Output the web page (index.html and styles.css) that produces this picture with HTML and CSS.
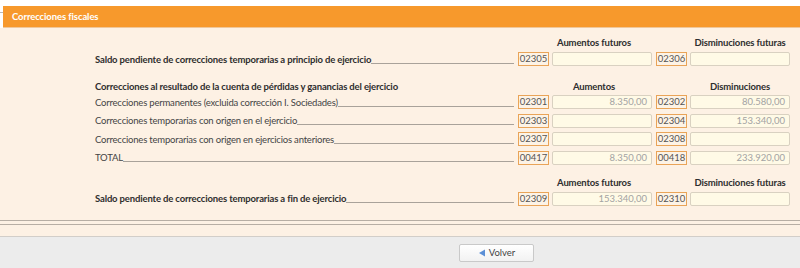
FILE: index.html
```html
<!DOCTYPE html>
<html lang="es">
<head>
<meta charset="utf-8">
<title>Correcciones fiscales</title>
<link rel="stylesheet" href="styles.css">
</head>
<body>
<div class="page">
  <div class="topline"><span class="stub"></span></div>
  <div class="titlebar">Correcciones fiscales</div>
  <div class="panel">
    <div class="content">
      <div class="heads first">
        <span class="h h1">Aumentos futuros</span>
        <span class="h h2">Disminuciones futuras</span>
      </div>
      <div class="row">
        <span class="label bold"><span class="txt">Saldo pendiente de correcciones temporarias a principio de ejercicio</span><span class="fill"></span></span>
        <span class="code">02305</span><span class="inp"></span>
        <span class="code c2">02306</span><span class="inp"></span>
      </div>

      <div class="heads sect">
        <span class="label bold"><span class="txt">Correcciones al resultado de la cuenta de pérdidas y ganancias del ejercicio</span></span>
        <span class="h h1">Aumentos</span>
        <span class="h h2">Disminuciones</span>
      </div>
      <div class="row r">
        <span class="label"><span class="txt">Correcciones permanentes (excluida corrección I. Sociedades)</span><span class="fill"></span></span>
        <span class="code">02301</span><span class="inp">8.350,00</span>
        <span class="code c2">02302</span><span class="inp">80.580,00</span>
      </div>
      <div class="row r">
        <span class="label"><span class="txt">Correcciones temporarias con origen en el ejercicio</span><span class="fill"></span></span>
        <span class="code">02303</span><span class="inp"></span>
        <span class="code c2">02304</span><span class="inp">153.340,00</span>
      </div>
      <div class="row r">
        <span class="label"><span class="txt">Correcciones temporarias con origen en ejercicios anteriores</span><span class="fill"></span></span>
        <span class="code">02307</span><span class="inp"></span>
        <span class="code c2">02308</span><span class="inp"></span>
      </div>
      <div class="row r">
        <span class="label"><span class="txt">TOTAL</span><span class="fill"></span></span>
        <span class="code">00417</span><span class="inp">8.350,00</span>
        <span class="code c2">00418</span><span class="inp">233.920,00</span>
      </div>

      <div class="heads last">
        <span class="h h1">Aumentos futuros</span>
        <span class="h h2">Disminuciones futuras</span>
      </div>
      <div class="row">
        <span class="label bold"><span class="txt">Saldo pendiente de correcciones temporarias a fin de ejercicio</span><span class="fill"></span></span>
        <span class="code">02309</span><span class="inp">153.340,00</span>
        <span class="code c2">02310</span><span class="inp"></span>
      </div>
    </div>
    <div class="sep"></div>
  </div>
  <div class="footer">
    <button class="btn" type="button"><svg class="tri" width="8" height="8" viewBox="0 0 8 8"><polygon points="7,0.5 7,7.5 1,4" fill="#5b8fd6"/></svg>Volver</button>
  </div>
</div>
</body>
</html>
```

FILE: styles.css
```css
html, body {
  margin: 0;
  padding: 0;
  background: #ffffff;
}
body {
  font-family: Lato, "Noto Sans", "DejaVu Sans", sans-serif;
  font-size: 9.5px;
  letter-spacing: -0.2px;
  color: #3a3a3a;
}
.page {
  width: 800px;
  height: 268px;
  overflow: hidden;
}
.topline {
  height: 6px;
  position: relative;
}
.stub {
  position: absolute;
  left: 0;
  top: 12px;
  width: 3px;
  border-top: 1px solid #b9b9b9;
}
.titlebar {
  margin-left: 3px;
  height: 21px;
  line-height: 21px;
  background: #f7992c;
  color: #ffffff;
  font-weight: bold;
  font-size: 9.5px;
  letter-spacing: -0.1px;
  padding-left: 9px;
  border-bottom: 1px solid #f0c79a;
}
.panel {
  background: #fdf1e4;
  height: 208px;
  box-sizing: border-box;
  padding-top: 9px;
}
.content {
  padding-left: 95px;
  padding-right: 10px;
  height: 183px;
  border-bottom: 1px solid #b7aea4;
}
.sep {
  margin-top: 3px;
  border-top: 1px solid #b7aea4;
}
.heads {
  display: flex;
  align-items: center;
  height: 12px;
  line-height: 12px;
  font-weight: bold;
  letter-spacing: -0.15px;
  color: #2e2e2e;
  white-space: nowrap;
}
.heads.first { justify-content: flex-end; }
.heads.last { justify-content: flex-end; margin-top: 12px; }
.heads.sect { margin-top: 15px; }
.heads .label { flex: 1; }
.h {
  display: block;
  text-align: center;
}
.h1 {
  width: 100px;
  margin-right: 46px;
}
.h2 {
  width: 100px;
}
.row {
  display: flex;
  align-items: center;
  height: 14px;
  margin-top: 3px;
}
.row.r { margin-top: 4.67px; }
.heads.sect + .row.r { margin-top: 2px; }
.label {
  flex: 1;
  display: flex;
  align-items: baseline;
  min-width: 0;
  margin-right: 4px;
  white-space: nowrap;
  color: #444;
}
.label.bold {
  font-weight: bold;
  letter-spacing: -0.15px;
  color: #2e2e2e;
}
.fill {
  flex: 1;
  border-bottom: 1px solid #a9a29a;
  height: 0;
  transform: translateY(1px);
}
.code {
  box-sizing: border-box;
  width: 31px;
  height: 14px;
  line-height: 12px;
  border: 1px solid #e9a458;
  background: #fdf3e6;
  color: #555;
  font-size: 9.5px;
  letter-spacing: 0;
  text-align: center;
}
.code.c2 { margin-left: 4px; }
.inp {
  box-sizing: border-box;
  width: 100px;
  height: 14px;
  line-height: 12px;
  margin-left: 3px;
  border: 1px solid #d9d1c1;
  border-radius: 2px;
  background: #fffae6;
  color: #a3a3a3;
  font-size: 9.5px;
  letter-spacing: 0;
  text-align: right;
  padding-right: 4px;
}
.footer {
  height: 31px;
  border-top: 1px solid #d2cec9;
  border-bottom: 1px solid #c8c8c8;
  background: #ececec;
  display: flex;
  align-items: center;
  padding-left: 459px;
}
.btn {
  width: 75px;
  height: 18px;
  padding: 0;
  border: 1px solid #c9c9c9;
  border-radius: 2px;
  background: linear-gradient(#ffffff, #f2f2f2);
  font-family: Lato, "Noto Sans", sans-serif;
  font-size: 9.5px;
  color: #444;
  display: flex;
  align-items: center;
  justify-content: center;
  gap: 3px;
}
.tri { display: block; }
```
